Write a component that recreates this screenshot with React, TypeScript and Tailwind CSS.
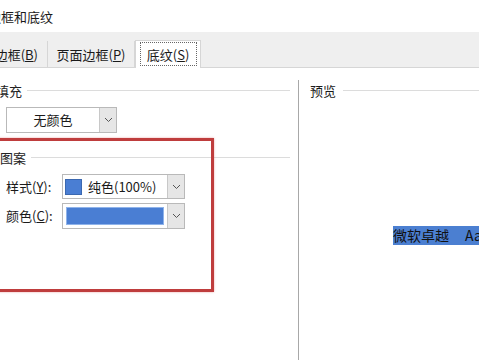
import React from 'react';

const Chevron: React.FC = () => (
  <svg width="9" height="6" viewBox="0 0 9 6" fill="none">
    <path d="M1 1l3.5 3.5L8 1" stroke="#555" strokeWidth="1" />
  </svg>
);

const DropButton: React.FC = () => (
  <div className="w-[17px] h-full bg-[#e6e6e6] border-l border-[#c8c8c8] flex items-center justify-center">
    <Chevron />
  </div>
);

const Legend: React.FC<{ label: string; offset: string }> = ({ label, offset }) => (
  <div className="flex items-center h-[18px]">
    <span className={`${offset} text-[13px] text-[#222] leading-none pr-[5px] whitespace-nowrap`}>{label}</span>
    <div className="flex-1 h-px bg-[#dcdcdc]" />
  </div>
);

export default function App() {
  return (
    <div className="w-[479px] h-[360px] overflow-hidden relative bg-white text-[#1a1a1a] font-['Microsoft_YaHei','Noto_Sans_CJK_SC',sans-serif]">
      {/* title */}
      <div className="h-[32px] flex items-center">
        <span className="ml-[-12px] text-[13px] leading-none whitespace-nowrap">边框和底纹</span>
      </div>

      {/* tab strip */}
      <div className="h-[36px] bg-[#efefef] border-b border-[#d6d6d6] flex items-end">
        <div className="w-[48px] shrink-0 h-[26px] border-r border-[#d6d6d6] flex items-center justify-end pr-[9px] pt-[2px] text-[13px] overflow-hidden">
          <span className="whitespace-nowrap">
            边框(<span className="underline">B</span>)
          </span>
        </div>
        <div className="w-[87px] shrink-0 h-[26px] border-r border-[#d6d6d6] flex items-center justify-center pt-[2px] text-[13px] whitespace-nowrap">
          <span>
            页面边框(<span className="underline">P</span>)
          </span>
        </div>
        <div className="w-[66px] shrink-0 h-[28px] bg-white border-x border-t border-[#d6d6d6] mb-[-1px] flex items-start justify-center pt-[1px] text-[13px] whitespace-nowrap">
          <div className="w-[57px] h-[24px] border border-dotted border-[#666] flex items-center justify-center pt-[1px]">
            底纹(<span className="underline">S</span>)
          </div>
        </div>
      </div>

      {/* body */}
      <div className="flex h-[292px]">
        <div className="w-[290px] shrink-0 pt-[13px]">
          <Legend label="填充" offset="ml-[-4px]" />
          <div className="ml-[6px] mt-[8px] w-[111px] h-[26px] border border-[#b9b9b9] flex">
            <div className="flex-1 flex items-center justify-center text-[13px]">无颜色</div>
            <DropButton />
          </div>

          <div className="mt-[15px]">
            <Legend label="图案" offset="ml-0" />
          </div>
          <div className="mt-[8px] flex flex-col gap-[4px]">
            <div className="flex items-center">
              <span className="w-[62px] pl-[6px] text-[13px] whitespace-nowrap">
                样式(<span className="underline">Y</span>):
              </span>
              <div className="w-[123px] h-[25px] border border-[#b9b9b9] flex">
                <div className="flex-1 flex items-center pl-[2px]">
                  <div className="w-[17px] h-[16px] bg-[#4a7ed3] border border-[#3b68b0]" />
                  <span className="ml-[6px] text-[13px] whitespace-nowrap">纯色(100%)</span>
                </div>
                <DropButton />
              </div>
            </div>
            <div className="flex items-center">
              <span className="w-[62px] pl-[6px] text-[13px] whitespace-nowrap">
                颜色(<span className="underline">C</span>):
              </span>
              <div className="w-[123px] h-[26px] border border-[#b9b9b9] flex">
                <div className="flex-1 p-[3px]">
                  <div className="w-full h-full bg-[#4a7ed3] border border-[#8fb3ea]" />
                </div>
                <DropButton />
              </div>
            </div>
          </div>
        </div>

        <div className="w-[8px] shrink-0" />
        <div className="flex-1 min-w-0 overflow-hidden border-l border-[#a8a8a8] mt-[12px] pt-[1px]">
          <div className="flex items-center h-[18px]">
            <span className="ml-[11px] pr-[7px] text-[13px] leading-none whitespace-nowrap">预览</span>
            <div className="flex-1 h-px bg-[#dcdcdc]" />
          </div>
          <div className="mt-[127px] ml-[94px] flex whitespace-nowrap">
            <span className="bg-[#4b7fd1] text-[#111] text-[14px] leading-[19px] flex shrink-0">
              微软卓越<span className="inline-block w-[16px]" />AaBbCc
            </span>
          </div>
        </div>
      </div>

      {/* annotation box */}
      <div className="absolute left-[-10px] top-[138px] w-[224px] h-[154px] border-[3px] border-[#bf3d3d] shadow-[0_0_2px_rgba(220,80,80,0.5)]" />
    </div>
  );
}
